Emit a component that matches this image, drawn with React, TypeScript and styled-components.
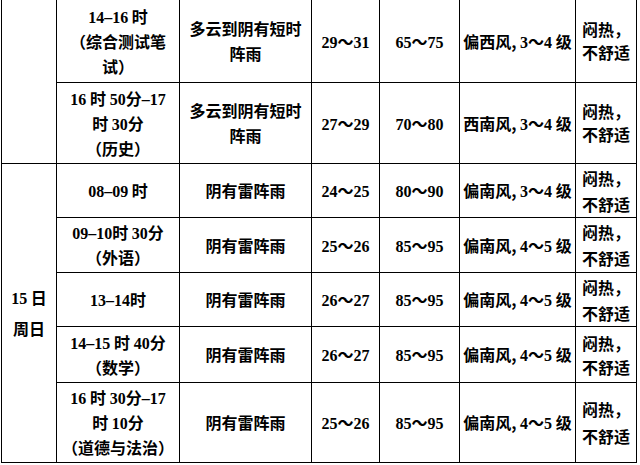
import React from 'react';
import styled, { createGlobalStyle } from 'styled-components';

const GlobalStyle = createGlobalStyle`
  html, body {
    margin: 0;
    padding: 0;
    background: #fff;
  }
  body {
    font-family: "Noto Sans CJK SC", sans-serif;
    color: #000;
  }
`;

const Page = styled.div`
  width: 640px;
  height: 465px;
  overflow: hidden;
  padding-left: 1px;
  box-sizing: border-box;
`;

const Table = styled.table`
  border-collapse: collapse;
  table-layout: fixed;
  width: 635px;
`;

const Col = styled.col<{ $w: number }>`
  width: ${p => p.$w}px;
`;

const Row = styled.tr<{ $h: number }>`
  height: ${p => p.$h}px;
`;

const Cell = styled.td<{ $lh?: number }>`
  border: 1px solid #000;
  padding: 1px 0 0;
  text-align: center;
  vertical-align: middle;
  font-size: 16px;
  font-weight: 700;
  line-height: ${p => p.$lh ?? 25}px;
  white-space: nowrap;
  overflow: hidden;

  tr:first-child > & {
    border-top: none;
  }
`;

const Line = styled.div``;

const Num = styled.span`
  font-family: "Liberation Serif", serif;
  font-weight: bold;
  line-height: 1;
`;

function rich(text: string) {
  return text.split(/([0-9–]+)/).map((part, i) =>
    /[0-9–]/.test(part) ? <Num key={i}>{part}</Num> : part
  );
}

function Lines({ items }: { items: string[] }) {
  return (
    <>
      {items.map((t, i) => (
        <Line key={i}>{rich(t)}</Line>
      ))}
    </>
  );
}

type Slot = {
  h: number;
  time: string[];
  weather: string[];
  temp: string;
  hum: string;
  wind: string;
  lh: number;
};

const slots: Slot[] = [
  { h: 82, time: ['14–16 时', '（综合测试笔', '试）'], weather: ['多云到阴有短时', '阵雨'], temp: '29～31', hum: '65～75', wind: '偏西风, 3～4 级', lh: 23 },
  { h: 81, time: ['16 时 50分–17', '时 30分', '（历史）'], weather: ['多云到阴有短时', '阵雨'], temp: '27～29', hum: '70～80', wind: '西南风, 3～4 级', lh: 23 },
  { h: 54, time: ['08–09 时'], weather: ['阴有雷阵雨'], temp: '24～25', hum: '80～90', wind: '偏南风, 3～4 级', lh: 26 },
  { h: 55, time: ['09–10时 30分', '（外语）'], weather: ['阴有雷阵雨'], temp: '25～26', hum: '85～95', wind: '偏南风, 4～5 级', lh: 26 },
  { h: 53, time: ['13–14时'], weather: ['阴有雷阵雨'], temp: '26～27', hum: '85～95', wind: '偏南风, 4～5 级', lh: 26 },
  { h: 56, time: ['14–15 时 40分', '（数学）'], weather: ['阴有雷阵雨'], temp: '26～27', hum: '85～95', wind: '偏南风, 4～5 级', lh: 24 },
  { h: 80, time: ['16 时 30分–17', '时 10分', '（道德与法治）'], weather: ['阴有雷阵雨'], temp: '25～26', hum: '85～95', wind: '偏南风, 4～5 级', lh: 27 },
];

const widths = [55, 123, 132, 68, 80, 116, 61];

export default function App() {
  return (
    <Page>
      <GlobalStyle />
      <Table>
        <colgroup>
          {widths.map((w, i) => (
            <Col key={i} $w={w} />
          ))}
        </colgroup>
        <tbody>
          {slots.map((s, i) => (
            <Row key={i} $h={s.h}>
              {i === 0 && <Cell rowSpan={2} />}
              {i === 2 && (
                <Cell rowSpan={5} $lh={31}>
                  <Lines items={['15 日', '周日']} />
                </Cell>
              )}
              <Cell>
                <Lines items={s.time} />
              </Cell>
              <Cell>
                <Lines items={s.weather} />
              </Cell>
              <Cell>{rich(s.temp)}</Cell>
              <Cell>{rich(s.hum)}</Cell>
              <Cell>{rich(s.wind)}</Cell>
              <Cell $lh={s.lh}>
                <Lines items={['闷热，', '不舒适']} />
              </Cell>
            </Row>
          ))}
        </tbody>
      </Table>
    </Page>
  );
}
